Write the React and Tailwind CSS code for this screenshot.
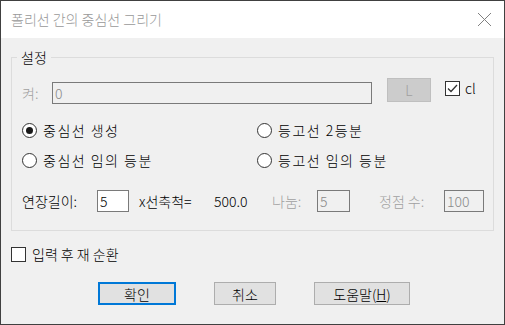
import { useState } from "react";

const FONT = { fontFamily: '"Noto Sans CJK KR", "Noto Sans", sans-serif' };

function Radio({ checked, label, onClick }) {
  return (
    <button type="button" onClick={onClick} className="flex items-center h-[20px] text-[14px] text-black">
      <span className="w-[15px] h-[15px] rounded-full border border-[#333333] bg-white flex items-center justify-center shrink-0">
        {checked && <span className="w-[7px] h-[7px] rounded-full bg-[#1a1a1a]" />}
      </span>
      <span className="ml-[6px] leading-[20px] tracking-[1.5px]">{label}</span>
    </button>
  );
}

function CheckBox({ checked, onClick }) {
  return (
    <span
      onClick={onClick}
      className="w-[15px] h-[15px] border border-[#333333] bg-white flex items-center justify-center shrink-0"
    >
      {checked && (
        <svg width="11" height="9" viewBox="0 0 11 9">
          <path d="M1 4.5 L4 7.5 L10 1" fill="none" stroke="#333333" strokeWidth="1.3" />
        </svg>
      )}
    </span>
  );
}

export default function App() {
  const [mode, setMode] = useState(0);
  const [cl, setCl] = useState(true);
  const [loop, setLoop] = useState(false);
  const [ext, setExt] = useState("5");

  return (
    <div style={FONT} className="w-[505px] h-[325px] border border-[#404040] flex flex-col bg-[#f0f0f0] overflow-hidden font-light">
      {/* 제목 표시줄 */}
      <div className="h-[37px] bg-white flex items-center justify-between pl-[10px] pr-[12px] shrink-0">
        <span className="text-[14px] text-[#999999]">폴리선 간의 중심선 그리기</span>
        <svg width="15" height="15" viewBox="0 0 15 15">
          <path d="M1 1 L14 14 M14 1 L1 14" stroke="#808080" strokeWidth="1" fill="none" />
        </svg>
      </div>

      <div className="flex-1 px-[10px]">
        {/* 설정 그룹 */}
        <fieldset className="mt-[10px] border border-[#dcdcdc] p-0 m-0 h-[183px]">
          <legend className="ml-[5px] px-[4px] text-[14px] leading-[18px] text-black">설정</legend>

          <div className="pl-[10px] pt-[12px]">
            <div className="flex items-start h-[26px]">
              <span className="w-[30px] mt-[4px] leading-[22px] text-[14px] text-[#a0a0a0]">켜:</span>
              <div className="w-[320px] h-[22px] mt-[4px] border border-[#7a7a7a] px-[2px] leading-[20px] text-[14px] text-[#8a8a8a]">0</div>
              <div className="ml-[15px] w-[44px] h-[24px] bg-[#cccccc] border border-[#bfbfbf] flex items-center justify-center text-[14px] text-[#a0a0a0]">L</div>
              <div className="ml-[14px] mt-[3px] flex items-center">
                <CheckBox checked={cl} onClick={() => setCl(!cl)} />
                <span className="ml-[5px] text-[14px] leading-[15px] text-black">cl</span>
              </div>
            </div>

            <div className="flex mt-[16px]">
              <div className="w-[235px]">
                <Radio checked={mode === 0} label="중심선 생성" onClick={() => setMode(0)} />
              </div>
              <Radio checked={mode === 1} label="등고선 2등분" onClick={() => setMode(1)} />
            </div>
            <div className="flex mt-[10px]">
              <div className="w-[235px]">
                <Radio checked={mode === 2} label="중심선 임의 등분" onClick={() => setMode(2)} />
              </div>
              <Radio checked={mode === 3} label="등고선 임의 등분" onClick={() => setMode(3)} />
            </div>

            <div className="flex items-center mt-[20px] h-[22px] text-[14px]">
              <span className="w-[75px] text-black">연장길이:</span>
              <input
                value={ext}
                onChange={(e) => setExt(e.target.value)}
                className="w-[32px] h-[22px] border border-[#7a7a7a] bg-white px-[2px] text-[14px] text-black outline-none"
              />
              <span className="ml-[10px] w-[75px] text-black">x선축척=</span>
              <span className="w-[58px] text-black">500.0</span>
              <span className="w-[45px] text-[#a0a0a0]">나눔:</span>
              <div className="w-[33px] h-[22px] border border-[#7a7a7a] px-[2px] leading-[20px] text-[#8a8a8a]">5</div>
              <span className="ml-[29px] w-[65px] text-[#a0a0a0]">정점 수:</span>
              <div className="w-[40px] h-[22px] border border-[#7a7a7a] px-[2px] leading-[20px] text-[#8a8a8a]">100</div>
            </div>
          </div>
        </fieldset>

        <div className="flex items-center mt-[16px] h-[15px]">
          <CheckBox checked={loop} onClick={() => setLoop(!loop)} />
          <span className="ml-[6px] text-[14px] text-black">입력 후 재 순환</span>
        </div>

        <div className="flex mt-[20px] text-[14px] text-black">
          <button className="ml-[87px] w-[78px] h-[23px] bg-[#e1e1e1] border-2 border-[#0078d7] leading-none">확인</button>
          <button className="ml-[38px] w-[62px] h-[23px] bg-[#e1e1e1] border border-[#adadad] leading-none">취소</button>
          <button className="ml-[38px] w-[96px] h-[23px] bg-[#e1e1e1] border border-[#adadad] leading-none">
            도움말(<span className="underline">H</span>)
          </button>
        </div>
      </div>
    </div>
  );
}
